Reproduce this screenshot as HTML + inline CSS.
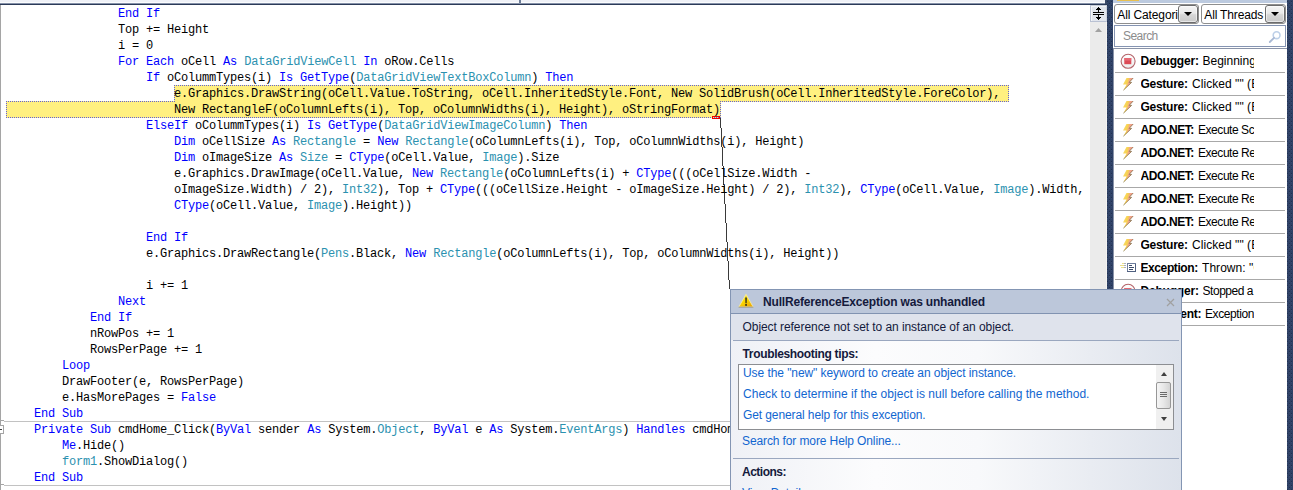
<!DOCTYPE html>
<html><head><meta charset="utf-8"><title>NullReferenceException was unhandled</title>
<style>
html,body{margin:0;padding:0}
body{width:1293px;height:490px;position:relative;overflow:hidden;background:#fff;font-family:"Liberation Sans",sans-serif;font-size:12px;color:#000}
.abs{position:absolute}
#code{position:absolute;left:6px;top:6px;width:1084px;height:485px;overflow:hidden;font-family:"Liberation Mono",monospace;font-size:12px;letter-spacing:-0.2px;color:#000}
#code .l{height:16px;line-height:16px;white-space:pre}
#code b{font-weight:normal}
.k{color:#0000ff} .t{color:#2b91af}
.row{position:absolute;left:1115px;width:170px;height:24px;box-sizing:border-box;border-bottom:1px solid #a8a8a8;overflow:hidden}
.row .ic{position:absolute;left:0;top:0}
.row .rt,.row .rb{position:absolute;top:1px;height:23px;line-height:23px;white-space:nowrap;overflow:hidden;font-size:12px}
.row .rb{left:25.5px}
.lnk{color:#1369c9}
.pt{font-size:12px;line-height:16px;white-space:nowrap;color:#141a3c}
.pt.lnk{color:#1166d0}
.cb{box-sizing:border-box;border:1px solid #8e8e8e;border-radius:3px;background:#fff;overflow:hidden}
.cbt{position:absolute;top:1px;height:18px;line-height:18px;font-size:12px;white-space:nowrap;overflow:hidden}
.dd{position:absolute;top:0;width:20px;height:18px;box-sizing:border-box;border:1px solid #6c6c6c;border-radius:3px;box-shadow:inset 0 0 0 1px rgba(255,255,255,.55);background:linear-gradient(#f4f4f4,#e9e9e9 45%,#d6d6d6 55%,#cacaca)}
.dd i{position:absolute;left:5px;top:6px;width:0;height:0;border-left:4px solid transparent;border-right:4px solid transparent;border-top:4.5px solid #000}

.dh{height:1px;background:repeating-linear-gradient(90deg,#6262d6 0,#6262d6 1px,transparent 1px,transparent 2px)}
.dv{width:1px;background:repeating-linear-gradient(180deg,#6262d6 0,#6262d6 1px,transparent 1px,transparent 2px)}
</style></head><body>
<!-- editor top band -->
<div class="abs" style="left:0;top:0;width:1107px;height:5px;background:#3a4a69"></div>
<div class="abs" style="left:0;top:0;width:1105px;height:2px;background:#eff1f7"></div>
<div class="abs" style="left:0;top:2px;width:1105px;height:1px;background:#fbfcfd"></div>
<div class="abs" style="left:0;top:3px;width:1105px;height:1px;background:#8591a9"></div>
<div class="abs" style="left:0;top:4px;width:1107px;height:1px;background:#2b3a58"></div>
<div class="abs" style="left:519px;top:0;width:2px;height:3px;background:#6d7d97"></div>
<div class="abs" style="left:0;top:5px;width:1px;height:485px;background:#a5a5a5"></div>
<!-- highlight -->
<div class="abs" style="left:174px;top:85px;width:835px;height:17px;background:#fff080"></div>
<div class="abs" style="left:6px;top:101px;width:715px;height:17px;background:#fff080"></div>
<div class="abs dh" style="left:174px;top:85px;width:835px"></div>
<div class="abs dh" style="left:720px;top:101px;width:289px"></div>
<div class="abs dh" style="left:6px;top:101px;width:169px"></div>
<div class="abs dh" style="left:6px;top:117px;width:715px"></div>
<div class="abs dv" style="left:174px;top:85px;height:17px"></div>
<div class="abs dv" style="left:1008px;top:85px;height:17px"></div>
<div class="abs dv" style="left:6px;top:101px;height:17px"></div>
<div class="abs dv" style="left:720px;top:101px;height:17px"></div>
<div class="abs" style="left:712px;top:116px;width:8px;height:3px;box-sizing:border-box;border:1px solid #f00000"></div>
<svg class="abs" style="left:715px;top:117px" width="20" height="174" viewBox="0 0 20 174" shape-rendering="crispEdges"><line x1="5.5" y1="1" x2="14.5" y2="172" stroke="#3a3a3a" stroke-width="1"/></svg>
<div id="code">
<div class="l">                <b class="k">End</b> <b class="k">If</b></div>
<div class="l">                Top += Height</div>
<div class="l">                i = 0</div>
<div class="l">                <b class="k">For</b> <b class="k">Each</b> oCell <b class="k">As</b> <b class="t">DataGridViewCell</b> <b class="k">In</b> oRow.Cells</div>
<div class="l">                    <b class="k">If</b> oColummTypes(i) <b class="k">Is</b> <b class="k">GetType</b>(<b class="t">DataGridViewTextBoxColumn</b>) <b class="k">Then</b></div>
<div class="l">                        e.Graphics.DrawString(oCell.Value.ToString, oCell.InheritedStyle.Font, New SolidBrush(oCell.InheritedStyle.ForeColor), </div>
<div class="l">                        New RectangleF(oColumnLefts(i), Top, oColumnWidths(i), Height), oStringFormat)</div>
<div class="l">                    <b class="k">ElseIf</b> oColummTypes(i) <b class="k">Is</b> <b class="k">GetType</b>(<b class="t">DataGridViewImageColumn</b>) <b class="k">Then</b></div>
<div class="l">                        <b class="k">Dim</b> oCellSize <b class="k">As</b> <b class="t">Rectangle</b> = <b class="k">New</b> <b class="t">Rectangle</b>(oColumnLefts(i), Top, oColumnWidths(i), Height)</div>
<div class="l">                        <b class="k">Dim</b> oImageSize <b class="k">As</b> <b class="t">Size</b> = <b class="k">CType</b>(oCell.Value, <b class="t">Image</b>).Size</div>
<div class="l">                        e.Graphics.DrawImage(oCell.Value, <b class="k">New</b> <b class="t">Rectangle</b>(oColumnLefts(i) + <b class="k">CType</b>(((oCellSize.Width -</div>
<div class="l">                        oImageSize.Width) / 2), <b class="t">Int32</b>), Top + <b class="k">CType</b>(((oCellSize.Height - oImageSize.Height) / 2), <b class="t">Int32</b>), <b class="k">CType</b>(oCell.Value, <b class="t">Image</b>).Width,</div>
<div class="l">                        <b class="k">CType</b>(oCell.Value, <b class="t">Image</b>).Height))</div>
<div class="l"></div>
<div class="l">                    <b class="k">End</b> <b class="k">If</b></div>
<div class="l">                    e.Graphics.DrawRectangle(<b class="t">Pens</b>.Black, <b class="k">New</b> <b class="t">Rectangle</b>(oColumnLefts(i), Top, oColumnWidths(i), Height))</div>
<div class="l"></div>
<div class="l">                    i += 1</div>
<div class="l">                <b class="k">Next</b></div>
<div class="l">            <b class="k">End</b> <b class="k">If</b></div>
<div class="l">            nRowPos += 1</div>
<div class="l">            RowsPerPage += 1</div>
<div class="l">        <b class="k">Loop</b></div>
<div class="l">        DrawFooter(e, RowsPerPage)</div>
<div class="l">        e.HasMorePages = <b class="k">False</b></div>
<div class="l">    <b class="k">End</b> <b class="k">Sub</b></div>
<div class="l">    <b class="k">Private</b> <b class="k">Sub</b> cmdHome_Click(<b class="k">ByVal</b> sender <b class="k">As</b> System.<b class="t">Object</b>, <b class="k">ByVal</b> e <b class="k">As</b> System.<b class="t">EventArgs</b>) <b class="k">Handles</b> cmdHome.Click</div>
<div class="l">        <b class="k">Me</b>.Hide()</div>
<div class="l">        <b class="t">form1</b>.ShowDialog()</div>
<div class="l">    <b class="k">End</b> <b class="k">Sub</b></div>
</div>
<!-- outline separators -->
<div class="abs" style="left:4px;top:421px;width:1086px;height:1px;background:#c2c2c2"></div>
<div class="abs" style="left:4px;top:485px;width:1086px;height:1px;background:#c2c2c2"></div>
<div class="abs" style="left:0;top:420px;width:4px;height:1px;background:#a5a5a5"></div>
<div class="abs" style="left:0;top:484px;width:4px;height:1px;background:#a5a5a5"></div>
<div class="abs" style="left:-5px;top:425px;width:9px;height:9px;box-sizing:border-box;border:1px solid #a5a5a5;background:#fff"></div>
<div class="abs" style="left:0;top:429px;width:2px;height:1px;background:#404040"></div>
<!-- editor scrollbar -->
<div class="abs" style="left:1090px;top:5px;width:16px;height:485px;background:#ebebeb"></div><div class="abs" style="left:1106px;top:5px;width:1px;height:485px;background:#f4f3f1"></div>
<div class="abs" style="left:1090px;top:5px;width:17px;height:17px;background:#e1e5ed;border:1px solid #b9c1d3;border-top-color:#c9cfdc;border-right-color:#cfd5e1;box-shadow:inset 1px 1px 0 rgba(255,255,255,.6);box-sizing:border-box"></div>
<svg class="abs" style="left:1090px;top:5px" width="17" height="17" viewBox="0 0 17 17" shape-rendering="crispEdges"><g fill="#000"><rect x="8" y="2" width="1" height="13"/><rect x="7" y="3" width="3" height="1"/><rect x="6" y="4" width="5" height="1"/><rect x="3" y="7" width="11" height="1"/><rect x="3" y="9" width="11" height="1"/><rect x="6" y="12" width="5" height="1"/><rect x="7" y="13" width="3" height="1"/></g><rect x="3" y="8" width="11" height="1" fill="#e1e5ed"/></svg>
<svg class="abs" style="left:1094px;top:27px" width="9" height="6" viewBox="0 0 9 6"><path d="M4.5 1 L8 5 H1 Z" fill="#a2a2a2"/></svg>
<!-- dark bands -->
<svg class="abs" style="left:0;top:0" width="1293" height="490" viewBox="0 0 1293 490" shape-rendering="crispEdges"><defs><pattern id="vsbg" width="4" height="4" patternUnits="userSpaceOnUse"><rect width="4" height="4" fill="#2f4267"/><rect x="3" y="1" width="1" height="1" fill="#233150"/><rect x="3" y="2" width="1" height="1" fill="#374a70"/><rect x="1" y="3" width="1" height="1" fill="#233150"/><rect x="1" y="0" width="1" height="1" fill="#374a70"/></pattern></defs><rect x="1107" y="0" width="6" height="490" fill="url(#vsbg)"/><rect x="1287" y="0" width="6" height="490" fill="url(#vsbg)"/></svg>
<!-- right panel -->
<div class="abs" style="left:1113px;top:0;width:174px;height:490px;background:#fff"></div>
<div class="abs" style="left:1113px;top:0;width:174px;height:3px;background:#bccadf"></div>
<div class="abs" style="left:1117px;top:0;width:22px;height:1px;background:#e8c050"></div>
<!-- panel header -->
<div class="abs cb" style="left:1114px;top:4px;width:85px;height:20px"><span class="cbt" style="left:2.3px;width:61px;letter-spacing:-0.12px">All Categories</span><span class="dd" style="left:63px"><i></i></span></div>
<div class="abs cb" style="left:1201px;top:4px;width:85px;height:20px"><span class="cbt" style="left:2.3px;width:61px;letter-spacing:-0.16px">All Threads</span><span class="dd" style="left:63px"><i></i></span></div>
<div class="abs" style="left:1114px;top:25px;width:172px;height:22px;box-sizing:border-box;border:1px solid #8594b2;background:#fff"><span style="position:absolute;left:8px;top:0;line-height:20px;color:#8c8c8c;font-size:12px;letter-spacing:-0.55px">Search</span>
<svg style="position:absolute;left:153px;top:4px" width="14" height="14" viewBox="0 0 14 14"><circle cx="8.6" cy="5.2" r="3.4" fill="none" stroke="#bdd0e8" stroke-width="1.6"/><path d="M6 7.8 L1.8 12" stroke="#a9b9d4" stroke-width="1.8" stroke-linecap="round"/></svg></div>
<div class="abs" style="left:1113px;top:48px;width:174px;height:442px;box-sizing:border-box;border:1px solid #8a93a8;border-bottom:none;border-right:none;background:#fff"></div>
<div class="row" style="top:49px"><svg class="ic" width="24" height="23" viewBox="0 0 24 23"><defs><linearGradient id="g0" x1="0" y1="0" x2="0" y2="1"><stop offset="0" stop-color="#ffffff"/><stop offset="1" stop-color="#ececec"/></linearGradient></defs><circle cx="13.1" cy="12.3" r="7" fill="url(#g0)" stroke="#b4646a" stroke-width="1.1"/><rect x="9.3" y="9" width="7" height="6.2" fill="#dc4a56"/><rect x="9.3" y="9" width="7" height="2.6" fill="#ea7580" opacity=".7"/></svg><b class="rb" style="letter-spacing:-0.2px">Debugger:</b><span class="rt" style="left:87.5px;width:51.5px;letter-spacing:0px">Beginning</span></div>
<div class="row" style="top:72px"><svg class="ic" width="24" height="23" viewBox="0 0 24 23"><defs><linearGradient id="g1" x1="0" y1="0" x2="1" y2="0.35"><stop offset="0" stop-color="#f9e066"/><stop offset="0.5" stop-color="#f6cf52"/><stop offset="0.62" stop-color="#f2a58a"/><stop offset="0.85" stop-color="#ee9a86"/><stop offset="1" stop-color="#8a7440"/></linearGradient></defs><path d="M11.5 6 L18.2 6 L14.2 10.4 L16.6 10.4 L8.4 18.2 L11.6 12.4 L8 12.4 Z" fill="url(#g1)"/><path d="M18.2 6 L14.2 10.4 L16.6 10.4 L8.4 18.2" fill="none" stroke="#6b5a2c" stroke-width="0.7" opacity=".9"/></svg><b class="rb" style="letter-spacing:-0.27px">Gesture:</b><span class="rt" style="left:77px;width:62px;letter-spacing:0.05px">Clicked "" (E</span></div>
<div class="row" style="top:95px"><svg class="ic" width="24" height="23" viewBox="0 0 24 23"><defs><linearGradient id="g2" x1="0" y1="0" x2="1" y2="0.35"><stop offset="0" stop-color="#f9e066"/><stop offset="0.5" stop-color="#f6cf52"/><stop offset="0.62" stop-color="#f2a58a"/><stop offset="0.85" stop-color="#ee9a86"/><stop offset="1" stop-color="#8a7440"/></linearGradient></defs><path d="M11.5 6 L18.2 6 L14.2 10.4 L16.6 10.4 L8.4 18.2 L11.6 12.4 L8 12.4 Z" fill="url(#g2)"/><path d="M18.2 6 L14.2 10.4 L16.6 10.4 L8.4 18.2" fill="none" stroke="#6b5a2c" stroke-width="0.7" opacity=".9"/></svg><b class="rb" style="letter-spacing:-0.27px">Gesture:</b><span class="rt" style="left:77px;width:62px;letter-spacing:0.05px">Clicked "" (E</span></div>
<div class="row" style="top:118px"><svg class="ic" width="24" height="23" viewBox="0 0 24 23"><defs><linearGradient id="g3" x1="0" y1="0" x2="1" y2="0.35"><stop offset="0" stop-color="#f9e066"/><stop offset="0.5" stop-color="#f6cf52"/><stop offset="0.62" stop-color="#f2a58a"/><stop offset="0.85" stop-color="#ee9a86"/><stop offset="1" stop-color="#8a7440"/></linearGradient></defs><path d="M11.5 6 L18.2 6 L14.2 10.4 L16.6 10.4 L8.4 18.2 L11.6 12.4 L8 12.4 Z" fill="url(#g3)"/><path d="M18.2 6 L14.2 10.4 L16.6 10.4 L8.4 18.2" fill="none" stroke="#6b5a2c" stroke-width="0.7" opacity=".9"/></svg><b class="rb" style="letter-spacing:-0.4px">ADO.NET:</b><span class="rt" style="left:83px;width:56px;letter-spacing:-0.45px">Execute Sca</span></div>
<div class="row" style="top:141px"><svg class="ic" width="24" height="23" viewBox="0 0 24 23"><defs><linearGradient id="g4" x1="0" y1="0" x2="1" y2="0.35"><stop offset="0" stop-color="#f9e066"/><stop offset="0.5" stop-color="#f6cf52"/><stop offset="0.62" stop-color="#f2a58a"/><stop offset="0.85" stop-color="#ee9a86"/><stop offset="1" stop-color="#8a7440"/></linearGradient></defs><path d="M11.5 6 L18.2 6 L14.2 10.4 L16.6 10.4 L8.4 18.2 L11.6 12.4 L8 12.4 Z" fill="url(#g4)"/><path d="M18.2 6 L14.2 10.4 L16.6 10.4 L8.4 18.2" fill="none" stroke="#6b5a2c" stroke-width="0.7" opacity=".9"/></svg><b class="rb" style="letter-spacing:-0.4px">ADO.NET:</b><span class="rt" style="left:83px;width:56px;letter-spacing:-0.45px">Execute Re</span></div>
<div class="row" style="top:164px"><svg class="ic" width="24" height="23" viewBox="0 0 24 23"><defs><linearGradient id="g5" x1="0" y1="0" x2="1" y2="0.35"><stop offset="0" stop-color="#f9e066"/><stop offset="0.5" stop-color="#f6cf52"/><stop offset="0.62" stop-color="#f2a58a"/><stop offset="0.85" stop-color="#ee9a86"/><stop offset="1" stop-color="#8a7440"/></linearGradient></defs><path d="M11.5 6 L18.2 6 L14.2 10.4 L16.6 10.4 L8.4 18.2 L11.6 12.4 L8 12.4 Z" fill="url(#g5)"/><path d="M18.2 6 L14.2 10.4 L16.6 10.4 L8.4 18.2" fill="none" stroke="#6b5a2c" stroke-width="0.7" opacity=".9"/></svg><b class="rb" style="letter-spacing:-0.4px">ADO.NET:</b><span class="rt" style="left:83px;width:56px;letter-spacing:-0.45px">Execute Re</span></div>
<div class="row" style="top:187px"><svg class="ic" width="24" height="23" viewBox="0 0 24 23"><defs><linearGradient id="g6" x1="0" y1="0" x2="1" y2="0.35"><stop offset="0" stop-color="#f9e066"/><stop offset="0.5" stop-color="#f6cf52"/><stop offset="0.62" stop-color="#f2a58a"/><stop offset="0.85" stop-color="#ee9a86"/><stop offset="1" stop-color="#8a7440"/></linearGradient></defs><path d="M11.5 6 L18.2 6 L14.2 10.4 L16.6 10.4 L8.4 18.2 L11.6 12.4 L8 12.4 Z" fill="url(#g6)"/><path d="M18.2 6 L14.2 10.4 L16.6 10.4 L8.4 18.2" fill="none" stroke="#6b5a2c" stroke-width="0.7" opacity=".9"/></svg><b class="rb" style="letter-spacing:-0.4px">ADO.NET:</b><span class="rt" style="left:83px;width:56px;letter-spacing:-0.45px">Execute Re</span></div>
<div class="row" style="top:210px"><svg class="ic" width="24" height="23" viewBox="0 0 24 23"><defs><linearGradient id="g7" x1="0" y1="0" x2="1" y2="0.35"><stop offset="0" stop-color="#f9e066"/><stop offset="0.5" stop-color="#f6cf52"/><stop offset="0.62" stop-color="#f2a58a"/><stop offset="0.85" stop-color="#ee9a86"/><stop offset="1" stop-color="#8a7440"/></linearGradient></defs><path d="M11.5 6 L18.2 6 L14.2 10.4 L16.6 10.4 L8.4 18.2 L11.6 12.4 L8 12.4 Z" fill="url(#g7)"/><path d="M18.2 6 L14.2 10.4 L16.6 10.4 L8.4 18.2" fill="none" stroke="#6b5a2c" stroke-width="0.7" opacity=".9"/></svg><b class="rb" style="letter-spacing:-0.4px">ADO.NET:</b><span class="rt" style="left:83px;width:56px;letter-spacing:-0.45px">Execute Re</span></div>
<div class="row" style="top:233px"><svg class="ic" width="24" height="23" viewBox="0 0 24 23"><defs><linearGradient id="g8" x1="0" y1="0" x2="1" y2="0.35"><stop offset="0" stop-color="#f9e066"/><stop offset="0.5" stop-color="#f6cf52"/><stop offset="0.62" stop-color="#f2a58a"/><stop offset="0.85" stop-color="#ee9a86"/><stop offset="1" stop-color="#8a7440"/></linearGradient></defs><path d="M11.5 6 L18.2 6 L14.2 10.4 L16.6 10.4 L8.4 18.2 L11.6 12.4 L8 12.4 Z" fill="url(#g8)"/><path d="M18.2 6 L14.2 10.4 L16.6 10.4 L8.4 18.2" fill="none" stroke="#6b5a2c" stroke-width="0.7" opacity=".9"/></svg><b class="rb" style="letter-spacing:-0.27px">Gesture:</b><span class="rt" style="left:77px;width:62px;letter-spacing:0.05px">Clicked "" (E</span></div>
<div class="row" style="top:256px"><svg class="ic" width="24" height="23" viewBox="0 0 24 23" shape-rendering="crispEdges"><rect x="12.5" y="7.5" width="8" height="8" fill="#fff" stroke="#6f7f9e" stroke-width="1"/><path d="M12 15.5h9M20.5 8v8" stroke="#4f6080" stroke-width="1" fill="none"/><path d="M14 9.5h3M14 11.5h5M14 13.5h4" stroke="#3c4c6c" stroke-width="1"/><path d="M7 7.5h2M5 9.5h4M6 11.5h3" stroke="#eadf8a" stroke-width="1"/><path d="M9 7.5h2M9 9.5h2M9 11.5h2" stroke="#aab0bf" stroke-width="1"/></svg><b class="rb" style="letter-spacing:-0.41px">Exception:</b><span class="rt" style="left:87px;width:52px;letter-spacing:0.05px">Thrown: "O</span></div>
<div class="row" style="top:279px"><svg class="ic" width="24" height="23" viewBox="0 0 24 23"><defs><linearGradient id="g10" x1="0" y1="0" x2="0" y2="1"><stop offset="0" stop-color="#ffffff"/><stop offset="1" stop-color="#ececec"/></linearGradient></defs><circle cx="13.1" cy="12.3" r="7" fill="url(#g10)" stroke="#b4646a" stroke-width="1.1"/><rect x="9.3" y="9" width="7" height="6.2" fill="#dc4a56"/><rect x="9.3" y="9" width="7" height="2.6" fill="#ea7580" opacity=".7"/></svg><b class="rb" style="letter-spacing:-0.2px">Debugger:</b><span class="rt" style="left:87.5px;width:51.5px;letter-spacing:-0.46px">Stopped a</span></div>
<div class="row" style="top:302px"><svg class="ic" width="24" height="23" viewBox="0 0 24 23"><circle cx="13.1" cy="12.3" r="7" fill="#fdf6f6" stroke="#b4646a" stroke-width="1.1"/></svg><b class="rb" style="letter-spacing:-0.31px">Live Event:</b><span class="rt" style="left:90px;width:49px;letter-spacing:-0.42px">Exception</span></div>
<!-- popup -->
<div class="abs" id="pop" style="left:730px;top:289px;width:452px;height:210px;box-sizing:border-box;border:1px solid #8395b3;background:linear-gradient(90deg,#eff1f6 0,#fcfcfd 32%,#f8f9fb 55%,#e9ecf2 80%,#dde2eb 100%)">
<div class="abs" style="left:0;top:0;width:450px;height:23px;background:#bcc7da;border-bottom:1px solid #8193b1"></div>
<svg class="abs" style="left:6.9px;top:3.4px" width="16" height="16" viewBox="0 0 16 16"><defs><linearGradient id="wg" x1="0.2" y1="0" x2="0.8" y2="1"><stop offset="0" stop-color="#fff040"/><stop offset="0.5" stop-color="#fbd800"/><stop offset="1" stop-color="#eaa400"/></linearGradient></defs><path d="M8 1.2 L15.2 14 H0.8 Z" fill="url(#wg)" stroke="#f4e9a8" stroke-width="0.9" stroke-linejoin="round"/><path d="M0.6 14.2 H15.4" stroke="#8f8f8f" stroke-width="0.9"/><path d="M7.3 4.6 h1.5 l-0.2 5.6 h-1.1 z" fill="#1c1c1c"/><ellipse cx="8.05" cy="11.9" rx="0.95" ry="0.85" fill="#1c1c1c"/></svg>
<span class="abs pt" id="ttl" style="letter-spacing:-0.17px;left:32px;top:4px;font-weight:bold">NullReferenceException was unhandled</span>
<svg class="abs" style="left:434.7px;top:7.5px" width="9" height="9" viewBox="0 0 9 9"><path d="M1 1 L8 8 M8 1 L1 8" stroke="#a0a0a0" stroke-width="1.2"/></svg>
<div class="abs" style="left:0;top:24px;width:450px;height:26px;background:#dfe3ec"></div>
<div class="abs" style="left:2px;top:50px;width:446px;height:1px;background:#9aa7bf"></div>
<span class="abs pt" id="desc" style="letter-spacing:-0.065px;left:11.5px;top:29px">Object reference not set to an instance of an object.</span>
<span class="abs pt" id="tt" style="letter-spacing:-0.33px;left:11.5px;top:56px;font-weight:bold">Troubleshooting tips:</span>
<div class="abs" style="left:7px;top:74px;width:436px;height:66px;box-sizing:border-box;border:1px solid #8c8e92;background:#fff">
 <span class="abs pt lnk" id="t1" style="letter-spacing:-0.07px;left:4px;top:0px">Use the "new" keyword to create an object instance.</span>
 <span class="abs pt lnk" id="t2" style="letter-spacing:0.034px;left:4px;top:21px">Check to determine if the object is null before calling the method.</span>
 <span class="abs pt lnk" id="t3" style="letter-spacing:-0.1px;left:4px;top:42px">Get general help for this exception.</span>
 <div class="abs" style="left:417px;top:0;width:17px;height:64px;background:#f0f0f0"></div>
 <div class="abs" style="left:422px;top:7px;width:0;height:0;border-left:3.5px solid transparent;border-right:3.5px solid transparent;border-bottom:4px solid #404040"></div>
 <div class="abs" style="left:422px;top:52px;width:0;height:0;border-left:3.5px solid transparent;border-right:3.5px solid transparent;border-top:4px solid #404040"></div>
 <div class="abs" style="left:417px;top:17px;width:15px;height:27px;box-sizing:border-box;border:1px solid #979797;border-radius:2px;background:linear-gradient(90deg,#f5f5f5,#e8e8e8 50%,#d4d4d4)"></div>
 <div class="abs" style="left:421px;top:27px;width:7px;height:1px;background:#6a6a6a;box-shadow:0 2px 0 #6a6a6a,0 4px 0 #6a6a6a"></div>
</div>
<span class="abs pt lnk" id="sh" style="letter-spacing:-0.11px;left:11px;top:143px">Search for more Help Online...</span>
<div class="abs" style="left:2px;top:168px;width:446px;height:1px;background:#9aa7bf"></div>
<span class="abs pt" id="act" style="letter-spacing:-0.5px;left:11px;top:174px;font-weight:bold">Actions:</span>
<span class="abs pt lnk" id="vd" style="letter-spacing:-0.1px;left:11px;top:195px">View Detail...</span>
</div>
</body></html>
